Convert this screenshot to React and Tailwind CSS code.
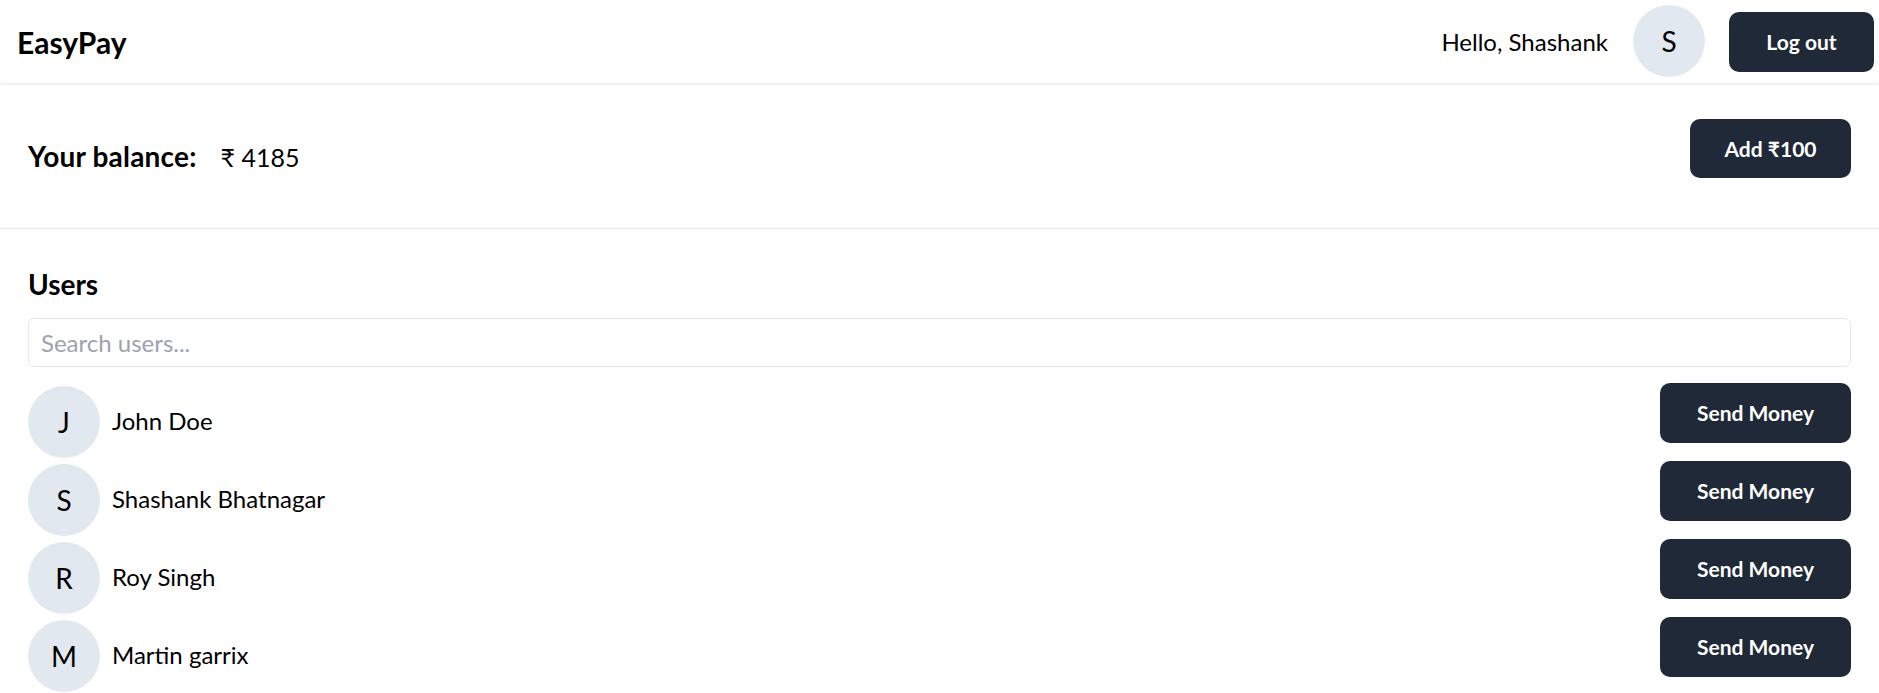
const USERS = [
  { id: 1, first: 'John', last: 'Doe' },
  { id: 2, first: 'Shashank', last: 'Bhatnagar' },
  { id: 3, first: 'Roy', last: 'Singh' },
  { id: 4, first: 'Martin', last: 'garrix' },
];

function Avatar({ letter, className = '' }) {
  return (
    <div className={`flex h-[72px] w-[72px] shrink-0 items-center justify-center rounded-full bg-[#e2e8f0] text-[28px] leading-none ${className}`}>
      {letter}
    </div>
  );
}

function DarkButton({ children, className = '' }) {
  return (
    <button className={`flex items-center justify-center rounded-[10px] bg-[#1f2937] font-bold text-white text-[21px] ${className}`}>
      {children}
    </button>
  );
}

function Appbar() {
  return (
    <div className="flex h-[83px] items-center justify-between shadow-[0_1px_3px_rgba(0,0,0,0.12)]">
      <div className="pl-[17px] text-[30px] font-bold leading-none">EasyPay</div>
      <div className="flex items-center pr-[5px]">
        <div className="text-[24px]">Hello, Shashank</div>
        <Avatar letter="S" className="ml-[25px] -mt-[1px]" />
        <DarkButton className="ml-[24px] h-[60px] w-[145px]">Log out</DarkButton>
      </div>
    </div>
  );
}

function Balance() {
  return (
    <div className="flex h-[146px] items-center justify-between border-b border-[#e5e7eb] px-[28px]">
      <div className="flex items-baseline">
        <span className="text-[28px] font-bold tracking-[0.2px]">Your balance:</span>
        <span className="ml-[24px] text-[25px]">₹ 4185</span>
      </div>
      <DarkButton className="mb-[14px] h-[59px] w-[161px]">Add ₹100</DarkButton>
    </div>
  );
}

function Users() {
  return (
    <div className="px-[28px] pt-[38px]">
      <div className="text-[28px] font-bold leading-[34px]">Users</div>
      <input
        type="text"
        placeholder="Search users..."
        className="mt-[17px] h-[49px] w-full rounded-[6px] border border-[#e2e8f0] px-[12px] text-[24px] outline-none placeholder:text-[#9ca3af]"
      />
      <div className="mt-[16px]">
        {USERS.map((u) => (
          <div key={u.id} className="flex h-[78px] items-start justify-between">
            <div className="mt-[3px] flex h-[72px] items-center">
              <Avatar letter={u.first[0]} />
              <div className="ml-[12px] pb-[2px] text-[24px]">
                {u.first} {u.last}
              </div>
            </div>
            <DarkButton className="h-[60px] w-[191px]">Send Money</DarkButton>
          </div>
        ))}
      </div>
    </div>
  );
}

export default function App() {
  return (
    <div className="min-h-screen bg-white text-black font-['Lato','Noto_Sans',sans-serif]">
      <Appbar />
      <Balance />
      <Users />
    </div>
  );
}
